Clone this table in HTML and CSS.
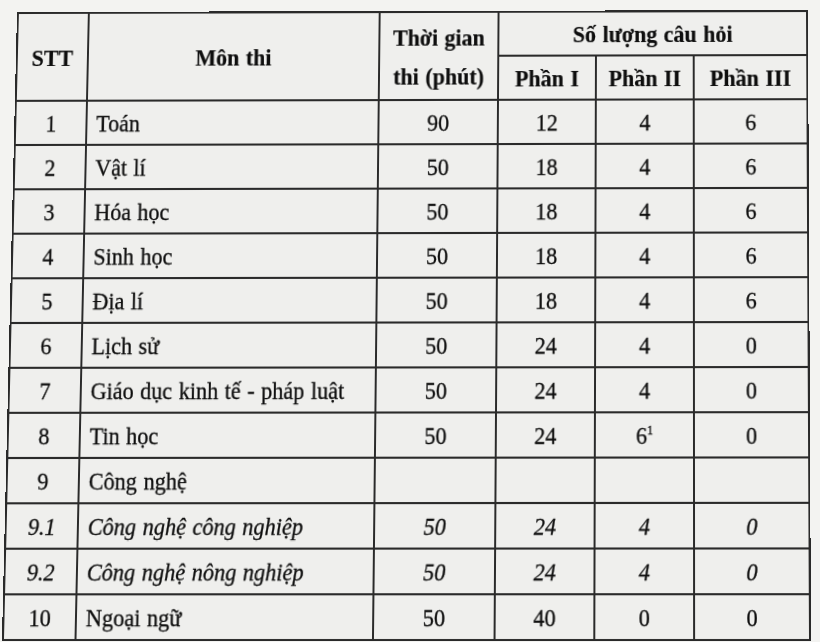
FILE: index.html
```
<!DOCTYPE html>
<html lang="vi">
<head>
<meta charset="utf-8">
<title>Số lượng câu hỏi</title>
<link rel="stylesheet" href="styles.css">
</head>
<body>
<table class="exam">
  <colgroup>
    <col class="c-stt">
    <col class="c-mon">
    <col class="c-time">
    <col class="c-p1">
    <col class="c-p2">
    <col class="c-p3">
  </colgroup>
  <thead>
    <tr>
      <th rowspan="2">STT</th>
      <th rowspan="2">Môn thi</th>
      <th rowspan="2" class="two-line">Thời gian<br>thi (phút)</th>
      <th colspan="3">Số lượng câu hỏi</th>
    </tr>
    <tr>
      <th>Phần I</th>
      <th>Phần II</th>
      <th>Phần III</th>
    </tr>
  </thead>
  <tbody>
    <tr><td>1</td><td class="name">Toán</td><td>90</td><td>12</td><td>4</td><td>6</td></tr>
    <tr><td>2</td><td class="name">Vật lí</td><td>50</td><td>18</td><td>4</td><td>6</td></tr>
    <tr><td>3</td><td class="name">Hóa học</td><td>50</td><td>18</td><td>4</td><td>6</td></tr>
    <tr><td>4</td><td class="name">Sinh học</td><td>50</td><td>18</td><td>4</td><td>6</td></tr>
    <tr><td>5</td><td class="name">Địa lí</td><td>50</td><td>18</td><td>4</td><td>6</td></tr>
    <tr><td>6</td><td class="name">Lịch sử</td><td>50</td><td>24</td><td>4</td><td>0</td></tr>
    <tr><td>7</td><td class="name">Giáo dục kinh tế - pháp luật</td><td>50</td><td>24</td><td>4</td><td>0</td></tr>
    <tr><td>8</td><td class="name">Tin học</td><td>50</td><td>24</td><td>6<sup>1</sup></td><td>0</td></tr>
    <tr><td>9</td><td class="name">Công nghệ</td><td></td><td></td><td></td><td></td></tr>
    <tr class="sub"><td>9.1</td><td class="name">Công nghệ công nghiệp</td><td>50</td><td>24</td><td>4</td><td>0</td></tr>
    <tr class="sub"><td>9.2</td><td class="name">Công nghệ nông nghiệp</td><td>50</td><td>24</td><td>4</td><td>0</td></tr>
    <tr><td>10</td><td class="name">Ngoại ngữ</td><td>50</td><td>40</td><td>0</td><td>0</td></tr>
  </tbody>
</table>
</body>
</html>
```

FILE: styles.css
```
html, body {
  margin: 0;
  padding: 0;
  background: #f3f3f1;
}

body {
  width: 820px;
  height: 642px;
  overflow: hidden;
  font-family: "Liberation Serif", "Times New Roman", serif;
  color: #0e0e0e;
}

.exam {
  width: 810px;
  table-layout: fixed;
  border-collapse: collapse;
  background: #efefed;
  font-size: 22.5px;
  word-spacing: 1px;
  -webkit-text-stroke: 0.3px #0e0e0e;
  transform-origin: 0 0;
  transform: matrix3d(0.970910, -0.0025084, 0, -0.0000039256,
                      -0.024991, 1.017866, 0, -0.000037032,
                      0, 0, 1, 0,
                      17, 12, 0, 1);
}

.c-stt { width: 73px; }
.c-mon { width: 299px; }
.c-time { width: 122px; }
.c-p1 { width: 100px; }
.c-p2 { width: 100px; }
.c-p3 { width: 116px; }

.exam tr {
  height: 43px;
}

.exam th,
.exam td {
  border: 2px solid #2a2a2a;
  padding: 3px 4px 0;
  text-align: center;
  vertical-align: middle;
  line-height: normal;
  white-space: nowrap;
}

.exam th {
  font-weight: bold;
  -webkit-text-stroke: 0.2px #0e0e0e;
}

.exam th.two-line {
  line-height: 38px;
}

.exam td.name {
  text-align: left;
  padding-left: 9px;
}

.exam tr.sub td {
  font-style: italic;
}

.exam sup {
  font-size: 12px;
  vertical-align: 9px;
  line-height: 0;
}
```
